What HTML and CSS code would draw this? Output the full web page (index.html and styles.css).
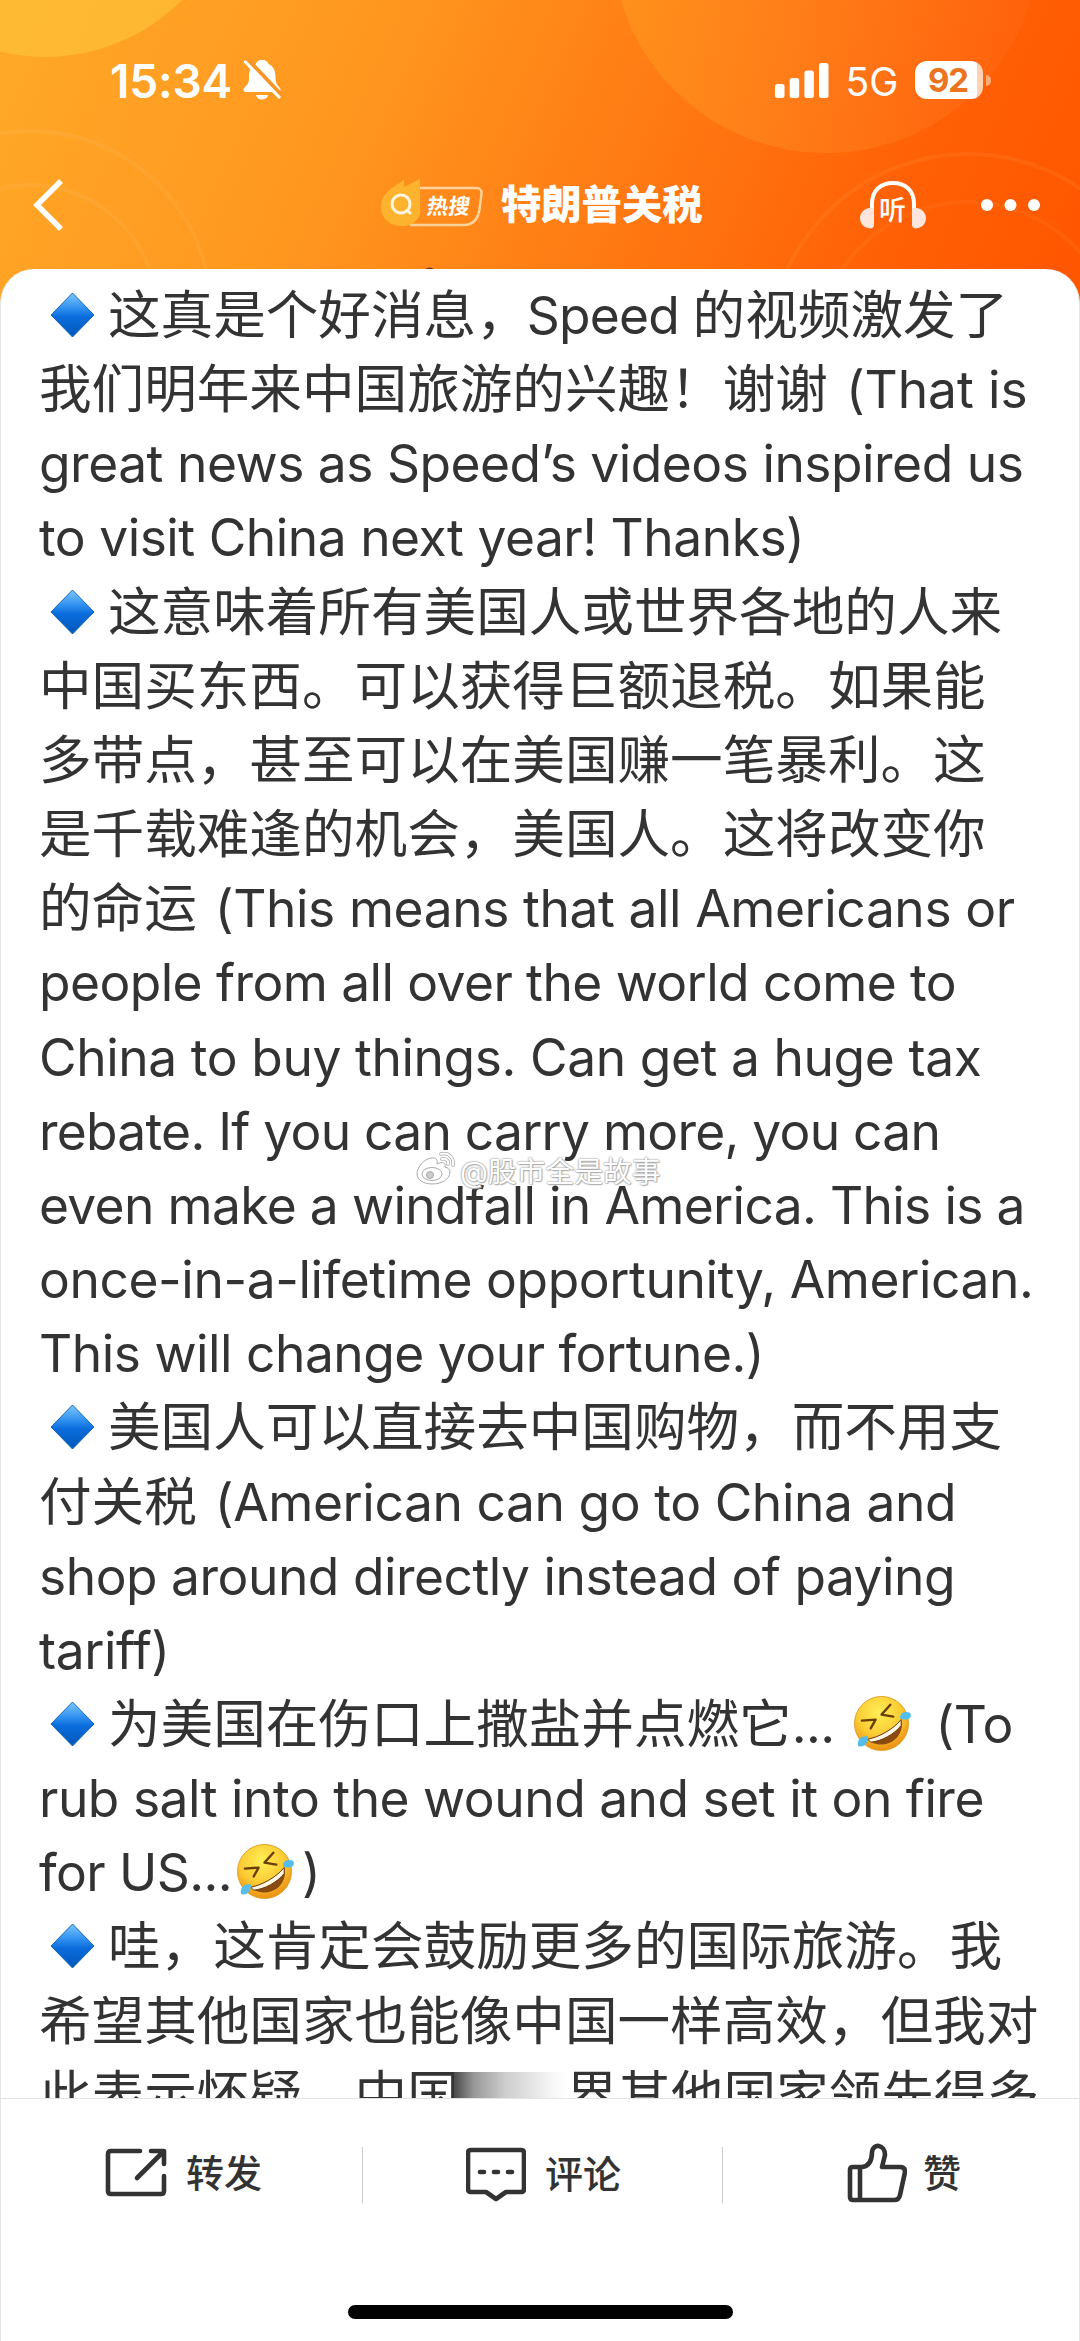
FILE: index.html
```html
<!DOCTYPE html>
<html lang="zh-CN">
<head>
<meta charset="utf-8">
<title>特朗普关税</title>
<link rel="stylesheet" href="styles.css">
</head>
<body>
<svg class="defs" aria-hidden="true">
  <defs>
    <linearGradient id="blue" x1="0" y1="0" x2="0" y2="1"><stop offset="0" stop-color="#7cc8ff"/><stop offset=".35" stop-color="#2f8ff0"/><stop offset=".55" stop-color="#0a6cdc"/><stop offset="1" stop-color="#0057b8"/></linearGradient>
    <radialGradient id="face" cx=".45" cy=".3" r=".75"><stop offset="0" stop-color="#ffee55"/><stop offset=".55" stop-color="#fbcb33"/><stop offset="1" stop-color="#e8850c"/></radialGradient>
    <symbol id="diamond" viewBox="0 0 45 46"><path d="M22.5 1 44 23 22.5 45 1 23Z" fill="url(#blue)" stroke="#1767b5" stroke-width="1"/></symbol>
    <symbol id="rofl" viewBox="0 0 58 58">
      <circle cx="28" cy="29" r="27.500" fill="url(#face)" stroke="#dfa02c" stroke-width="1"/>
      <path d="M14 45C25 43 40 35 48 25c3 10-3 21-13 24-8 3-16 1-21-4Z" fill="#8a4a10"/>
      <path d="M14 45C25 43 40 35 48 25l0 6C41 40 28 47 17 48Z" fill="#fff6e4" stroke="#6b3a0c" stroke-width="1"/>
      <path d="M8 26l14-1-5 9M37 10l-9 10 12 2" fill="none" stroke="#6b3f0a" stroke-width="2.4" stroke-linejoin="round" stroke-linecap="round"/>
      <path d="M47 24c-1-6 5-8 10-6 3 5-2 9-10 6Z" fill="#55bdea"/>
      <path d="M14 42c-7-1-11 3-10 10 6 2 11-3 10-10Z" fill="#55bdea"/>
    </symbol>
  </defs>
</svg>
<div class="screen">
  <header class="header">
    <svg class="header-art" viewBox="0 0 1080 330">
      <circle cx="45" cy="-136" r="193" fill="#ffc63c" fill-opacity=".6"/>
      <circle cx="826" cy="-61" r="214" fill="url(#orb)"/>
      <g fill="none" stroke="#ffc070" stroke-opacity=".16" stroke-width="4"><circle cx="30" cy="312" r="181"/><circle cx="30" cy="312" r="127"/><circle cx="968" cy="353" r="199" stroke-opacity=".1"/><circle cx="968" cy="353" r="151" stroke-opacity=".08"/></g>
      <defs><linearGradient id="orb"><stop offset="0" stop-color="#ffa01e" stop-opacity=".5"/><stop offset="1" stop-color="#ff8a40" stop-opacity=".1"/></linearGradient></defs>
      <path d="M425 269q5-3 9 0Z" fill="#6b3a1a"/>
    </svg>
    <div class="status">
      <span class="clock">15:34</span>
      <svg class="bell" viewBox="0 0 40 42"><path d="M19 1c4 0 6 2 6.500 4 5 2 7 7 7 13 0 6 1.500 8 4.500 11 1 1 .5 4-1.500 4H3c-3 0-3-3-1.500-4.500C5 25 6 24 6 18c0-7 2-11 7-13 .5-2 2-4 6-4Z" fill="#fff"/><path d="M13 36h12c-1 6-11 6-12 0Z" fill="#fff"/><path d="M4 1 38 37" stroke="#f99526" stroke-width="6"/><path d="M2.500 3 36 38" stroke="#fff" stroke-width="3.200" stroke-linecap="round"/></svg>
      <svg class="signal" viewBox="0 0 54 35" fill="#fff"><rect y="21" width="9.500" height="14" rx="2.500"/><rect x="14.700" y="15" width="9.500" height="20" rx="2.500"/><rect x="29.400" y="7.500" width="9.500" height="27.500" rx="2.500"/><rect x="44" width="9.500" height="35" rx="2.500"/></svg>
      <span class="net">5G</span>
      <span class="battery">92</span><span class="nub"></span>
    </div>
    <nav class="nav">
      <svg class="back" viewBox="0 0 34 56"><path d="M29 4 5 28 29 52" fill="none" stroke="#fff" stroke-width="5.500"/></svg>
      <div class="topic">
        <span class="badge">
          <svg viewBox="0 0 104 50"><path d="M36 10H96c4 0 6 2 5.500 6l-2 15c-1.500 11-7 16-16 16H30" fill="none" stroke="#ffd29c" stroke-width="2.500"/><path d="M24 2 24 9 40 1 40 36C36 46 29 48 22 48 9 48 1 40 1 29 1 15 12 10 24 2Z" fill="#fdb32d"/><circle cx="21" cy="26" r="9" fill="none" stroke="#fff5e0" stroke-width="3"/><path d="m27 32 4 4" stroke="#fff5e0" stroke-width="3"/></svg>
          <b>热搜</b>
        </span>
        <h1>特朗普关税</h1>
      </div>
      <span class="listen">
        <svg viewBox="0 0 66 50"><path d="M12 31V24C12 10 21 3 33 3s21 7 21 21v7" fill="none" stroke="#fff" stroke-width="4"/><path d="M14 28v17c0 3-3 4-6 3-5-1-8-5-8-10s4-9 9-10ZM52 28v17c0 3 3 4 6 3 5-1 8-5 8-10s-4-9-9-10Z" fill="#ffe6dc"/></svg>
        <i>听</i>
      </span>
      <svg class="more" viewBox="0 0 60 14" fill="#fff"><circle cx="7" cy="7" r="6"/><circle cx="30.500" cy="7" r="6"/><circle cx="54" cy="7" r="6"/></svg>
    </nav>
  </header>
  <main class="post">
    <p class="line"><svg class="dia"><use href="#diamond"/></svg>这真是个好消息，<span class="en name">Speed </span>的视频激发了</p>
    <p class="line">我们明年来中国旅游的兴趣！谢谢<span class="en open wider">(That is</span></p>
    <p class="line en loose">great news as Speed’s videos inspired us</p>
    <p class="line en loose">to visit China next year! Thanks)</p>
    <p class="line"><svg class="dia"><use href="#diamond"/></svg>这意味着所有美国人或世界各地的人来</p>
    <p class="line">中国买东西。可以获得巨额退税。如果能</p>
    <p class="line">多带点，甚至可以在美国赚一笔暴利。这</p>
    <p class="line">是千载难逢的机会，美国人。这将改变你</p>
    <p class="line">的命运<span class="en open wide">(This means that all Americans or</span></p>
    <p class="line en">people from all over the world come to</p>
    <p class="line en wide">China to buy things. Can get a huge tax</p>
    <p class="line en tight">rebate. If you can carry more, you can</p>
    <p class="line en snug">even make a windfall in America. This is a</p>
    <p class="line en wide">once-in-a-lifetime opportunity, American.</p>
    <p class="line en loose">This will change your fortune.)</p>
    <p class="line"><svg class="dia"><use href="#diamond"/></svg>美国人可以直接去中国购物，而不用支</p>
    <p class="line">付关税<span class="en open wide">(American can go to China and</span></p>
    <p class="line en loose">shop around directly instead of paying</p>
    <p class="line en wide">tariff)</p>
    <p class="line"><svg class="dia"><use href="#diamond"/></svg>为美国在伤口上撒盐并点燃它<span class="en">...</span><svg class="emo spaced"><use href="#rofl"/></svg><span class="en">(To</span></p>
    <p class="line en loose">rub salt into the wound and set it on fire</p>
    <p class="line en">for US...<svg class="emo"><use href="#rofl"/></svg>)</p>
    <p class="line"><svg class="dia"><use href="#diamond"/></svg>哇，这肯定会鼓励更多的国际旅游。我</p>
    <p class="line">希望其他国家也能像中国一样高效，但我对</p>
    <p class="line">此表示怀疑。中国<span class="smudge"></span>界其他国家领先得多</p>
    <div class="watermark">
      <svg viewBox="0 0 40 34"><g fill="#fff" stroke="#aaa" stroke-width="1"><path d="M15 6c-7 1-14 9-14 16 0 6 7 10 15 10 10 0 18-5 18-12 0-3-2-4-5-5 1-4-2-6-8-3 1-4-1-7-6-6Z"/><ellipse cx="16" cy="22" rx="10" ry="6.500"/><circle cx="14" cy="23" r="3.500" fill="#ccc"/></g><path d="M25 2c8-2 13 4 12 11M26 7c4-1 7 2 6 5" fill="none" stroke="#aaa" stroke-width="3.500" stroke-linecap="round"/><path d="M25 2c8-2 13 4 12 11M26 7c4-1 7 2 6 5" fill="none" stroke="#fff" stroke-width="2" stroke-linecap="round"/></svg>
      <span>@股市全是故事</span>
    </div>
  </main>
  <footer class="actions">
    <div class="action share"><svg viewBox="0 0 62 50"><path d="M35 3H6Q3 3 3 6V43q0 3 3 3H56q3 0 3-3V28" /><path d="M46 3H59V16M58 4 32 30"/></svg><span>转发</span></div>
    <div class="action comment"><svg viewBox="0 0 60 55"><path d="M5 3H55q3 0 3 3V42q0 3-3 3H40L30 52 20 45H5q-3 0-3-3V6q0-3 3-3Z"/><path d="M14 25h4M28 25h4M42 25h4"/></svg><span>评论</span></div>
    <div class="action like"><svg viewBox="0 0 60 60"><path d="M3 27q0-3 3-3H15C23 23 25 17 25 9 26 0 38 1 38 12L35 24H53q5 0 5 5L53 52q-1 5-6 5H6q-3 0-3-3ZM13 25V56"/></svg><span>赞</span></div>
    <div class="home"></div>
  </footer>
</div>
</body>
</html>
```
FILE: styles.css
```css
* { box-sizing: border-box; }
body { margin: 0; background: #fff; }
.defs { position: absolute; width: 0; height: 0; }
.screen {
  position: relative;
  width: 1080px; height: 2341px;
  display: flex; flex-direction: column;
  overflow: hidden;
  font-family: "Inter", "Noto Sans CJK SC", sans-serif;
  color: #333;
}
.header {
  position: relative;
  flex: none;
  height: 330px; margin-bottom: -61px;
  color: #fff;
  background: linear-gradient(114deg, #ffa928 0%, #ff971f 32%, #ff7c14 56%, #ff5f05 82%, #ff5500 100%);
}
.header-art { position: absolute; left: 0; top: 0; z-index: 1; width: 1080px; height: 330px; clip-path: inset(0 0 61px 0); }
.status { position: relative; z-index: 2; height: 160px; display: flex; align-items: center; padding: 0 89px 0 110px; }
.clock { font-size: 46px; font-weight: 600; width: 133px; letter-spacing: -.2px; padding-top: 1px; }
.bell { width: 40px; height: 42px; margin-right: auto; }
.signal { width: 54px; height: 35px; }
.net { width: 86px; text-align: center; font-size: 39px; padding-top: 2px; }
.battery {
  width: 68px; height: 38px; border-radius: 12px;
  background: linear-gradient(90deg, #fff 62px, #ffd2b4 62px);
  color: #ea7420; font-size: 33px; font-weight: 700; line-height: 38px; text-align: center;
  padding-right: 2px; letter-spacing: -1px;
}
.nub { width: 5px; height: 11px; margin-left: 3px; border-radius: 0 5px 5px 0; background: #ffb078; }
.nav { position: relative; z-index: 2; height: 90px; display: flex; align-items: center; padding: 0 40px 0 32px; }
.back { width: 34px; height: 56px; }
.topic { display: flex; align-items: center; margin-left: 314px; }
.badge { position: relative; width: 104px; height: 50px; margin-top: -5px; }
.badge svg { display: block; width: 104px; height: 50px; }
.badge b { position: absolute; left: 47px; top: 12px; font-size: 21.500px; line-height: 32px; font-weight: 700; transform: skewX(-8deg); }
.topic h1 { margin: 0 0 0 17px; font-size: 40.300px; line-height: 60px; font-weight: 900; }
.listen { position: relative; width: 66px; height: 50px; margin-left: auto; }
.listen svg { display: block; width: 66px; height: 50px; }
.listen i { position: absolute; left: 19px; top: 11px; font-size: 27px; line-height: 40px; font-style: normal; font-weight: 500; }
.more { width: 60px; height: 14px; margin-left: 54px; }

.post {
  position: relative; z-index: 1;
  flex: none;
  height: 1829px; padding: 9px 0 0 38px;
  background: #fff;
  border-radius: 34px 34px 0 0;
  border-left: 1px solid #e6e6e6; border-right: 1px solid #e6e6e6;
  overflow: hidden;
}
.line { margin: 0; height: 74.160px; line-height: 74.160px; font-size: 52.600px; white-space: nowrap; }
.en { font-size: 51.500px; letter-spacing: -.57px; }
.en.tight { letter-spacing: -.75px; }
.en.snug { letter-spacing: -.67px; }
.en.loose { letter-spacing: -.49px; }
.en.wide { letter-spacing: -.42px; }
.en.wider { letter-spacing: -.1px; }
.en.name { letter-spacing: -.8px; margin-left: -2px; }
.open { margin-left: 18px; }
.dia { width: 45px; height: 46px; margin: 0 13px 0 11px; vertical-align: -4px; }
.emo { width: 57px; height: 57px; margin: 0 8px 0 5px; vertical-align: -9px; }
.emo.spaced { margin: 0 25px 0 19px; }
.smudge {
  display: inline-block; width: 112px; height: 26px; margin: 0 0 0 -6px; vertical-align: 16px;
  background: linear-gradient(90deg, #4a4a4a, #999 18%, #ccc 45%, #f4f4f4 85%, #fff);
}
.watermark { position: absolute; left: 415px; top: 880px; display: flex; align-items: center; gap: 4px; height: 40px; }
.watermark svg { width: 40px; height: 34px; }
.watermark span { font-size: 28.800px; color: #fff; text-shadow: 0 0 2px #999, 0 0 2px #aaa, 1px 1px 1px #bbb; white-space: nowrap; }

.actions {
  position: relative; z-index: 1; flex: 1;
  display: grid; grid-template: 150px 1fr / 362px 360px 358px;
  border: 1px solid #e4e4e4; border-bottom: 0;
  background: #fff;
}
.action { display: flex; align-items: center; font-size: 38px; font-weight: 500; }
.action svg { fill: none; stroke: #333; stroke-width: 4.600; stroke-linecap: round; stroke-linejoin: round; }
.action span { margin-top: -5px; }
.share, .comment { background: linear-gradient(#ccc, #ccc) right 48px / 1px 56px no-repeat; }
.share { padding: 0 0 2px 104px; gap: 19px; }
.share svg { width: 62px; height: 50px; }
.comment { padding-left: 103px; gap: 19px; }
.comment svg { width: 60px; height: 55px; }
.like { padding: 0 0 2px 124px; gap: 16px; }
.like svg { width: 60px; height: 60px; }
.home { grid-column: 1 / -1; justify-self: center; align-self: end; width: 385px; height: 14px; margin: 0 1px 22px 0; border-radius: 7px; background: #000; }
```
